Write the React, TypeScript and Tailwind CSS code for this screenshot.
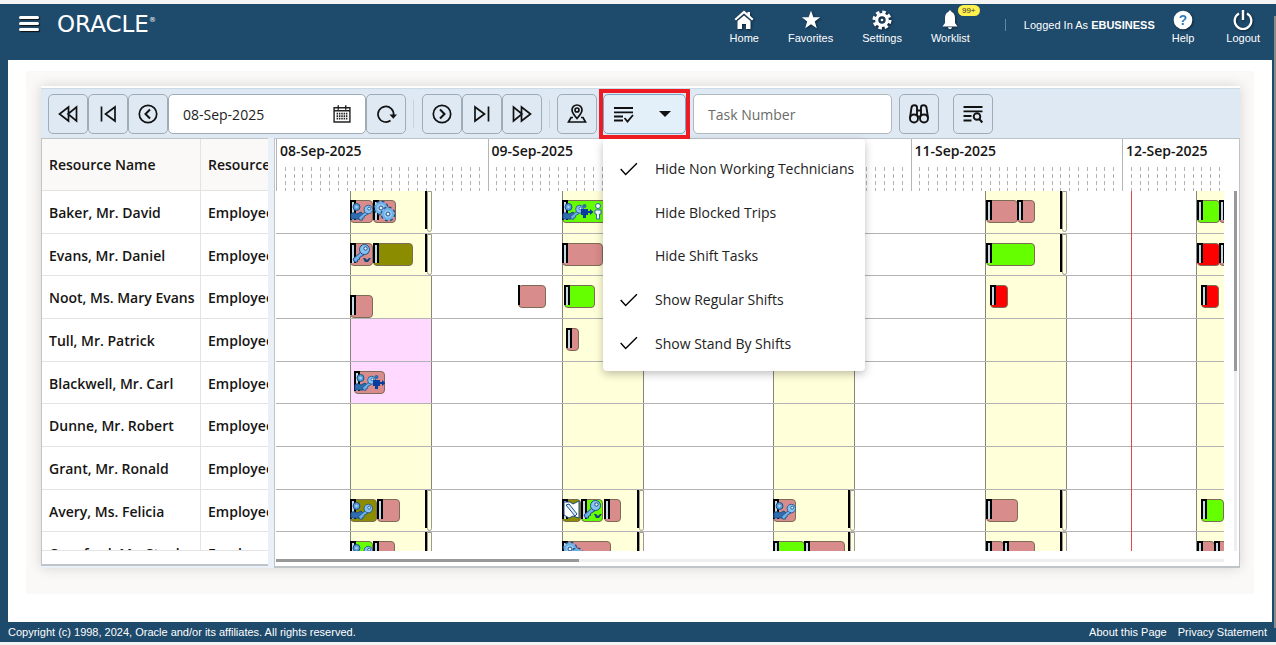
import type { ReactNode } from "react";
import clsx from "clsx";

const DAY_WIDTH = 211.5;
const days = ["08-Sep-2025", "09-Sep-2025", "10-Sep-2025", "11-Sep-2025", "12-Sep-2025"];

type Color = "pink" | "green" | "olive" | "red";
type Art = "techKey" | "gears" | "key" | "trip" | "dispatch" | "wrench";

interface Task {
  day: number;
  at: number;
  width: number;
  color: Color;
  art?: Art;
  late?: boolean;
  noTravel?: boolean;
}

interface Resource {
  name: string;
  standBy?: boolean;
  handles?: boolean;
  tasks: Task[];
}

const resources: Resource[] = [
  {
    name: "Baker, Mr. David",
    handles: true,
    tasks: [
      { day: 0, at: 74, width: 23, color: "pink", art: "techKey" },
      { day: 0, at: 97, width: 23, color: "pink", art: "gears" },
      { day: 1, at: 74, width: 48, color: "green", art: "trip" },
      { day: 3, at: 75, width: 32, color: "pink" },
      { day: 3, at: 106, width: 18, color: "pink" },
      { day: 4, at: 75, width: 23, color: "green" },
      { day: 4, at: 97, width: 20, color: "pink" },
    ],
  },
  {
    name: "Evans, Mr. Daniel",
    handles: true,
    tasks: [
      { day: 0, at: 74, width: 23, color: "pink", art: "key" },
      { day: 0, at: 97, width: 40, color: "olive" },
      { day: 1, at: 74, width: 41, color: "pink" },
      { day: 3, at: 75, width: 49, color: "green" },
      { day: 4, at: 75, width: 23, color: "red" },
      { day: 4, at: 97, width: 20, color: "pink" },
    ],
  },
  {
    name: "Noot, Ms. Mary Evans",
    tasks: [
      { day: 0, at: 74, width: 23, color: "pink", late: true },
      { day: 1, at: 30, width: 28, color: "pink", noTravel: true },
      { day: 1, at: 76, width: 31, color: "green" },
      { day: 3, at: 79, width: 18, color: "red" },
      { day: 4, at: 79, width: 18, color: "red" },
    ],
  },
  {
    name: "Tull, Mr. Patrick",
    standBy: true,
    tasks: [{ day: 1, at: 78, width: 13, color: "pink" }],
  },
  {
    name: "Blackwell, Mr. Carl",
    standBy: true,
    tasks: [{ day: 0, at: 78, width: 31, color: "pink", art: "dispatch" }],
  },
  { name: "Dunne, Mr. Robert", tasks: [] },
  { name: "Grant, Mr. Ronald", tasks: [] },
  {
    name: "Avery, Ms. Felicia",
    handles: true,
    tasks: [
      { day: 0, at: 74, width: 27, color: "olive", art: "techKey" },
      { day: 0, at: 101, width: 23, color: "pink" },
      { day: 1, at: 74, width: 19, color: "olive", art: "wrench" },
      { day: 1, at: 93, width: 22, color: "green", art: "key" },
      { day: 1, at: 116, width: 17, color: "pink" },
      { day: 2, at: 74, width: 23, color: "pink", art: "techKey" },
      { day: 3, at: 75, width: 32, color: "pink" },
      { day: 4, at: 79, width: 23, color: "green" },
    ],
  },
  {
    name: "Crawford, Mr. Stephen",
    handles: true,
    tasks: [
      { day: 0, at: 74, width: 23, color: "green", art: "techKey" },
      { day: 0, at: 97, width: 22, color: "pink" },
      { day: 1, at: 74, width: 49, color: "pink", art: "gears" },
      { day: 2, at: 74, width: 32, color: "green" },
      { day: 2, at: 105, width: 41, color: "pink" },
      { day: 3, at: 75, width: 18, color: "pink" },
      { day: 3, at: 92, width: 32, color: "pink" },
      { day: 4, at: 75, width: 18, color: "pink" },
      { day: 4, at: 92, width: 20, color: "pink" },
    ],
  },
];

const taskColors: Record<Color, string> = {
  pink: "bg-[#d98c8c]",
  green: "bg-[#66ff00]",
  olive: "bg-[#8c8c00]",
  red: "bg-[#ff0000]",
};

const menuItems = [
  { label: "Hide Non Working Technicians", checked: true },
  { label: "Hide Blocked Trips", checked: false },
  { label: "Hide Shift Tasks", checked: false },
  { label: "Show Regular Shifts", checked: true },
  { label: "Show Stand By Shifts", checked: true },
];

const Icon = ({ children, className = "size-6" }: { children: ReactNode; className?: string }) => (
  <svg
    viewBox="0 0 24 24"
    className={clsx("shrink-0", className)}
    fill="none"
    stroke="currentColor"
    strokeWidth="1.7"
    aria-hidden="true"
  >
    {children}
  </svg>
);

const Technician = () => (
  <g stroke="#1d4f86" strokeWidth="1">
    <path d="M1 19v-5c2-2 4-1 6 0l4-2 2 2-4 5z" fill="#2f6db0" />
    <circle cx="6.500" cy="7" r="3.500" fill="#5c9fd8" />
    <circle cx="6.500" cy="7" r="1.200" fill="#a9d2f5" stroke="none" />
  </g>
);

const Key = () => (
  <g stroke="#1d4f86" strokeWidth="1">
    <path d="M12 8L3 16l1.500 3h3l0-2 2-.5 0-2 5-3z" fill="#6fb0e6" />
    <circle cx="14.500" cy="6.500" r="5" fill="#86c2f2" />
    <circle cx="15.500" cy="5.500" r="1.700" fill="#e2f1fd" />
  </g>
);

const Gear = ({ x, y, r }: { x: number; y: number; r: number }) => (
  <g>
    <circle cx={x} cy={y} r={r} fill="none" stroke="#1d4f86" strokeWidth="5" strokeDasharray="2.200 1.700" />
    <circle cx={x} cy={y} r={r} fill="#9dcdf5" stroke="#6fb0e6" strokeWidth="2.500" />
    <circle cx={x} cy={y} r={r / 2.5} fill="#e2f1fd" stroke="#1d4f86" strokeWidth="1" />
  </g>
);

const TaskArt = ({ art }: { art: Art }) => (
  <svg className="absolute left-0 top-0 h-[22px] w-[46px]" viewBox="0 0 46 22" aria-hidden="true">
    {art === "techKey" && (
      <>
        <Technician />
        <g transform="translate(6 4) scale(0.85)">
          <Key />
        </g>
      </>
    )}
    {art === "key" && (
      <>
        <Key />
        <path d="M13 15h2l2 2 2-2h2l-3 4h-3z" fill="#17457a" />
      </>
    )}
    {art === "gears" && (
      <>
        <Gear x={8} y={8} r={5} />
        <Gear x={15} y={14} r={5} />
      </>
    )}
    {art === "wrench" && (
      <>
        <path d="M2 3h6l3 2 6-3v17l-6-2-4 2-5-3z" fill="#fff" stroke="#1d4f86" />
        <path d="M4 6l9 11 2-2L7 5z" fill="#dcecfb" stroke="#1d4f86" />
      </>
    )}
    {(art === "trip" || art === "dispatch") && (
      <>
        <Technician />
        <g transform="translate(6 4) scale(0.8)">
          <Key />
        </g>
        <circle cx="22.500" cy="6" r="2" fill="#2f6db0" />
        <path d="M19 9h7v6h-2v3h-3v-3h-2z" fill="#0a3c9c" />
        <path d="M25 11h3V9l3.500 3-3.500 3v-2h-3z" fill="#0a3c9c" />
      </>
    )}
    {art === "trip" && (
      <>
        <circle cx="36" cy="6" r="2.500" fill="#fff" stroke="#2f6db0" />
        <path d="M33 10h6v4h-1.500v5h-3v-5H33z" fill="#fff" stroke="#2f6db0" />
      </>
    )}
  </svg>
);

const TaskBar = ({ task }: { task: Task }) => (
  <div
    className={clsx("absolute h-[23px]", task.late ? "top-[19px]" : "top-[9px]")}
    style={{ left: task.day * DAY_WIDTH + task.at, width: task.width }}
  >
    <div
      className={clsx(
        "relative h-full overflow-hidden rounded-[4px] border border-[#7d6c55]",
        taskColors[task.color]
      )}
    />
    <div
      className={clsx(
        "absolute left-0 top-0 h-5 border-black",
        task.noTravel ? "w-0.5 border-l-2" : "w-1.5 border-x-2 border-t-2 bg-[#c5d9e6]"
      )}
    />
    {task.art && (
      <div className="absolute inset-0 overflow-hidden">
        <TaskArt art={task.art} />
      </div>
    )}
  </div>
);

const ToolButton = ({
  label,
  className,
  children,
}: {
  label: string;
  className?: string;
  children: ReactNode;
}) => (
  <button
    aria-label={label}
    className={clsx(
      "flex h-10 w-10 shrink-0 items-center justify-center rounded-[5px] border border-[#9fabb5] text-[#111]",
      className
    )}
  >
    {children}
  </button>
);

const NavItem = ({ label, children }: { label: string; children: ReactNode }) => (
  <a href="#" className="relative flex flex-col items-center">
    <svg viewBox="0 0 20 20" className="size-5 drop-shadow-[1px_1px_1px_rgba(0,0,0,0.5)]" fill="#fff" aria-hidden="true">
      {children}
    </svg>
    <span>{label}</span>
  </a>
);

const Header = () => (
  <header className="flex h-14 items-start bg-[#1e4a6c] pl-[19px] pr-4 font-['Liberation_Sans',Arial,sans-serif] text-[11px] leading-4 text-white">
    <button aria-label="Menu" className="mt-3 flex w-5 flex-col gap-[3px]">
      <span className="h-[3px] rounded-sm bg-white shadow-[1px_1px_1px_#111]" />
      <span className="h-[3px] rounded-sm bg-white shadow-[1px_1px_1px_#111]" />
      <span className="h-[3px] rounded-sm bg-white shadow-[1px_1px_1px_#111]" />
    </button>
    <div className="ml-[18px] mt-2 flex items-start font-['DejaVu_Sans',Verdana,sans-serif] text-[23px] leading-6">
      ORACLE<sup className="top-0 text-[7px] leading-4">®</sup>
    </div>

    <nav className="ml-auto flex items-start pt-1">
      <div className="flex gap-[29px] pt-0.5">
        <NavItem label="Home">
          <path d="M10 .5L.5 9l1.500 1.500L10 3.500l8 7L19.500 9 16 5.800V2h-2.500v1.600z" />
          <path d="M10 5.500l-6.500 5.600V19H8v-5h4v5h4.500v-7.900z" />
        </NavItem>
        <NavItem label="Favorites">
          <path d="M10 .8l2.400 6.500h6.800l-5.400 4.200 2 6.800L10 14.300l-5.800 4 2-6.800L.8 7.300h6.800z" />
        </NavItem>
        <NavItem label="Settings">
          <circle cx="10" cy="10" r="8" fill="none" stroke="#fff" strokeWidth="3" strokeDasharray="3.500 2.780" />
          <circle cx="10" cy="10" r="5.300" fill="none" stroke="#fff" strokeWidth="3.200" />
          <circle cx="10" cy="10" r="1.300" />
        </NavItem>
        <div className="relative">
          <NavItem label="Worklist">
            <path d="M10 .5c1 0 1.500.7 1.500 1.500C14 2.800 15 5 15 8v5l2.500 3.500h-15L5 13V8c0-3 1-5.200 3.500-6C8.500 1.200 9 .5 10 .5zM8 17.300h4c0 2.400-4 2.400-4 0z" />
          </NavItem>
          <span className="absolute -top-[5px] left-[27px] rounded-full bg-[#fff04d] px-1 text-[8px] leading-[11px] text-[#333]">
            99+
          </span>
        </div>
      </div>
      <div className="ml-[35px] mt-[11px] h-3 w-px bg-[#5c87a8]" />
      <p className="ml-[18px] mt-[9px]">
        Logged In As <b>EBUSINESS</b>
      </p>
      <div className="ml-[17px] flex gap-8 pt-0.5">
        <NavItem label="Help">
          <circle cx="10" cy="10" r="9.300" />
          <text x="10" y="15" textAnchor="middle" fontSize="14" fontWeight="700" fill="#2b7bbf">
            ?
          </text>
        </NavItem>
        <NavItem label="Logout">
          <path d="M6 3.500a8.300 8.300 0 108 0" fill="none" stroke="#fff" strokeWidth="2.300" />
          <path d="M8.800 0h2.400v10H8.800z" />
        </NavItem>
      </div>
    </nav>
  </header>
);

const OptionsMenu = () => (
  <div
    role="menu"
    className="absolute left-0 top-[45px] z-20 grid h-[232px] w-[262px] grid-rows-5 rounded-[4px] bg-white pb-1.5 pt-2 shadow-[0_3px_8px_rgba(0,0,0,0.25)]"
  >
    {menuItems.map((item) => (
      <button
        key={item.label}
        role="menuitemcheckbox"
        aria-checked={item.checked}
        className="flex items-center whitespace-nowrap pl-4 text-left text-[14px] text-[#222]"
      >
        <span className="w-9">
          {item.checked && (
            <Icon className="size-5 text-black">
              <path d="M2 12l6 6.500L21.500 5" />
            </Icon>
          )}
        </span>
        {item.label}
      </button>
    ))}
  </div>
);

const Toolbar = () => (
  <div className="flex h-[50px] items-start border-t border-[#cbdae7] bg-[#dfe9f3] pl-[7px] pt-[5px]">
    <ToolButton label="Previous week">
      <Icon>
        <path d="M12.500 5v14L3.500 12zM20.500 5v14l-8.500-7z" />
      </Icon>
    </ToolButton>
    <ToolButton label="Previous day">
      <Icon>
        <path d="M5.500 4.500v15M19 5v14L9.500 12z" />
      </Icon>
    </ToolButton>
    <ToolButton label="Previous">
      <Icon>
        <circle cx="12" cy="12" r="8.700" />
        <path d="M14 7.500L9.500 12l4.500 4.500" strokeWidth="2" />
      </Icon>
    </ToolButton>
    <div className="relative">
      <input
        aria-label="Date"
        defaultValue="08-Sep-2025"
        className="h-10 w-[198px] rounded-[5px] border border-[#9fabb5] bg-white pl-3.5 text-[14px] text-[#222]"
      />
      <button aria-label="Open calendar" className="absolute right-3.5 top-2.5 text-[#222]">
        <Icon className="size-5">
          <path d="M2.500 4.500h19v17h-19zM2.500 8h19M7.500 1.500V7M16.500 1.500V7" />
          <path d="M5.500 11.500h13M5.500 14.500h13M5.500 17.500h13" strokeWidth="2" strokeDasharray="1.800 1" />
        </Icon>
      </button>
    </div>
    <ToolButton label="Refresh">
      <Icon>
        <path d="M16.500 18.500A7.800 7.800 0 1119.600 13" />
        <path d="M15.500 12.500h7.500l-3.700 4.300z" fill="currentColor" stroke="none" />
      </Icon>
    </ToolButton>
    <div className="ml-[7px] mr-2 mt-1.5 h-7 w-px bg-[#c6d2dd]" />
    <ToolButton label="Next">
      <Icon>
        <circle cx="12" cy="12" r="8.700" />
        <path d="M10 7.500l4.500 4.500-4.500 4.500" strokeWidth="2" />
      </Icon>
    </ToolButton>
    <ToolButton label="Next day">
      <Icon>
        <path d="M18.500 4.500v15M5 5v14l9.500-7z" />
      </Icon>
    </ToolButton>
    <ToolButton label="Next week">
      <Icon>
        <path d="M11.500 5v14l9-7zM3.500 5v14l8.500-7z" />
      </Icon>
    </ToolButton>
    <div className="mx-[7px] mt-1.5 h-7 w-px bg-[#c6d2dd]" />
    <ToolButton label="Map">
      <Icon>
        <path d="M12 16.500C8.500 12.500 7 10.500 7 8a5 5 0 0110 0c0 2.500-1.500 4.500-5 8.500z" />
        <circle cx="12" cy="8" r="2" />
        <path d="M8 15.500H6L3.500 20h17L18 15.500h-2" />
      </Icon>
    </ToolButton>

    <div className="relative ml-1.5">
      <button
        aria-label="Display options"
        aria-expanded="true"
        className="flex h-10 w-[83px] items-center justify-between rounded-[5px] border border-[#79a5c8] bg-[#e3eff9] px-2 text-[#111]"
      >
        <Icon>
          <path d="M2 6h19M2 10.300h19M2 14.500h9M2 18.500h9" strokeWidth="1.800" />
          <path d="M12.500 16l3 3.500 5.500-6.500" strokeWidth="1.800" />
        </Icon>
        <Icon>
          <path d="M6 9h12l-6 6z" fill="currentColor" stroke="none" />
        </Icon>
      </button>
      <OptionsMenu />
      <span className="pointer-events-none absolute -inset-x-1 -inset-y-[5px] z-30 border-4 border-[#ed1c24]" />
    </div>

    <input
      aria-label="Task Number"
      placeholder="Task Number"
      className="ml-[7px] h-10 w-[199px] rounded-[5px] border border-[#b0b7bd] bg-white pl-3.5 text-[14px] text-[#222] placeholder:text-[#6b6b68]"
    />
    <ToolButton label="Find" className="ml-[7px]">
      <Icon>
        <circle cx="7" cy="16.500" r="4" strokeWidth="1.900" />
        <circle cx="17" cy="16.500" r="4" strokeWidth="1.900" />
        <path d="M3 16L4.500 5.500C5 2.500 10 2.500 10 5.500V14M21 16L19.500 5.500C19 2.500 14 2.500 14 5.500V14M10 8.500h4M10.500 14.500h3" strokeWidth="1.900" />
      </Icon>
    </ToolButton>
    <ToolButton label="Advanced search" className="ml-3.5">
      <Icon>
        <path d="M2.500 5h19M2.500 9.300h19M2.500 14h8M2.500 18.500h8" strokeWidth="1.800" />
        <circle cx="16" cy="14.500" r="3.300" strokeWidth="1.900" />
        <path d="M18.300 17l3 3.500" strokeWidth="2" />
      </Icon>
    </ToolButton>
  </div>
);

const ResourceTable = () => (
  <div className="h-[428px] w-[227px] shrink-0 border-b-2 border-l border-t border-[#bfc4c8] bg-white">
    <table className="block h-[412px] overflow-hidden border-b border-[#e5e5e5] text-[14px] font-semibold text-[#161513]">
      <thead className="block">
        <tr className="grid h-[52px] grid-cols-[159px_1fr] items-stretch border-b border-[#e3e3e3] bg-[#faf9f8] text-left leading-[52px]">
          <th className="overflow-hidden whitespace-nowrap border-r border-[#e3e3e3] pl-[7px] font-semibold">
            Resource Name
          </th>
          <th className="overflow-hidden whitespace-nowrap pl-[7px] font-semibold">Resource</th>
        </tr>
      </thead>
      <tbody className="grid h-96 grid-rows-9 leading-[43px]">
        {resources.map((r) => (
          <tr key={r.name} className="grid min-h-0 grid-cols-[159px_1fr] border-b border-[#e3e3e3]">
            <td className="overflow-hidden whitespace-nowrap border-r border-[#e3e3e3] pl-[7px]">{r.name}</td>
            <td className="overflow-hidden whitespace-nowrap pl-[7px]">Employee</td>
          </tr>
        ))}
      </tbody>
    </table>
  </div>
);

const Timeline = () => (
  <div className="flex h-[430px] min-w-0 flex-1 flex-col border-x border-b-2 border-t border-[#bfc4c8] bg-white pl-px">
    <div className="mr-[15px] flex h-[52px] overflow-hidden">
      {days.map((day) => (
        <div
          key={day}
          className="flex shrink-0 flex-col justify-between border-l border-[#b5b5b5]"
          style={{ width: DAY_WIDTH }}
        >
          <span className="pl-[3px] text-[14px] font-semibold leading-6 text-[#161513]">{day}</span>
          <div className="flex h-6 justify-evenly">
            {Array.from({ length: 23 }, (_, i) => (
              <span
                key={i}
                className="w-px bg-[repeating-linear-gradient(to_bottom,#b3b3b3_0_4px,transparent_4px_7px)]"
              />
            ))}
          </div>
        </div>
      ))}
    </div>

    <div className="flex h-[360px] justify-between pr-[2px]">
      <div className="relative mr-2.5 min-w-0 flex-1 overflow-hidden">
        <div className="grid h-96 grid-rows-9">
          {resources.map((r) => (
            <div key={r.name} className="relative min-h-0 border-b border-[#b3b3b3]">
              {days.map((day, d) => (
                <div
                  key={day}
                  className={clsx(
                    "absolute inset-y-0 w-[82px] border-x border-[#85857a]",
                    r.standBy && d === 0 ? "bg-[#ffd9ff]" : "bg-[#ffffd9]",
                    r.handles && "border-r-transparent bg-clip-padding"
                  )}
                  style={{ left: d * DAY_WIDTH + 74 }}
                >
                  {r.handles && (
                    <div className="absolute -right-px top-0 flex h-[41px] w-[7px]">
                      <span className="h-[38px] w-0.5 bg-black" />
                      <span className="flex-1 rounded-b-[3px] border border-[#9c9c8c] bg-[#ffffe6]" />
                    </div>
                  )}
                </div>
              ))}
              {r.tasks.map((t) => (
                <TaskBar key={`${t.day}-${t.at}`} task={t} />
              ))}
            </div>
          ))}
        </div>
        {/* current time */}
        <div className="absolute inset-y-0 left-[855px] w-px bg-[#e04848]" />
      </div>
      <div className="w-[3px] bg-[#eee]">
        <div className="h-1/2 bg-[#999]" />
      </div>
    </div>
    <div className="mr-[15px] mt-2 h-[3px] bg-[#eee]">
      <div className="h-full w-[32%] bg-[#999]" />
    </div>
  </div>
);

const App = () => {
  return (
    <div className="relative flex min-h-screen flex-col border-b-[3px] border-t-4 border-[#f4f4f4] bg-[#1e4a6c] font-['Open_Sans','Segoe_UI',sans-serif]">
      <Header />

      <main className="ml-2 mr-1 flex-1 bg-white pt-[11px]">
        <div className="mx-[18px] bg-[#faf9f8] pb-[26px] pl-[15px] pr-3.5 pt-[15px]">
          <div className="bg-[#fdfdfc] pt-0.5 shadow-[0_0_12px_rgba(0,0,0,0.15)]">
            <Toolbar />
            <div className="flex items-start bg-[#e9f0f7]">
              <ResourceTable />
              <div className="w-1.5 shrink-0" />
              <Timeline />
            </div>
          </div>
        </div>
      </main>

      <footer className="flex h-5 items-center gap-[11px] pl-2 pr-[9px] font-['Liberation_Sans',Arial,sans-serif] text-[11px] text-white">
        <p className="mr-auto">Copyright (c) 1998, 2024, Oracle and/or its affiliates. All rights reserved.</p>
        <a href="#">About this Page</a>
        <a href="#">Privacy Statement</a>
      </footer>

      <div className="absolute bottom-3.5 right-0 top-3 w-0.5 bg-[#8b8b8b]" />
    </div>
  );
};

export default App;
